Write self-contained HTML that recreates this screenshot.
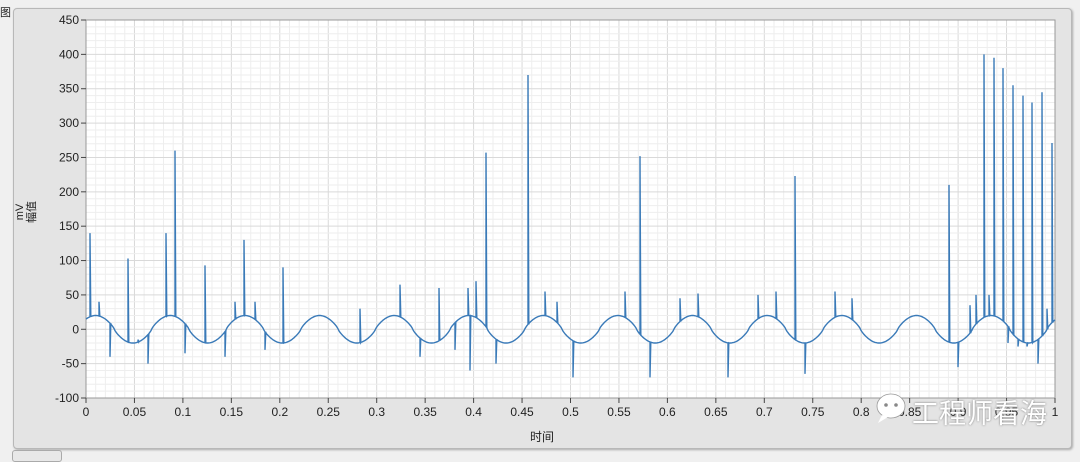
<!DOCTYPE html><html><head><meta charset="utf-8"><style>
body{margin:0;width:1080px;height:456px;background:#f0f0f0;font-family:"Liberation Sans","Noto Sans CJK SC",sans-serif;overflow:hidden;position:relative}
.panel{position:absolute;left:13px;top:8px;width:1057px;height:439px;background:#e4e4e4;border:1px solid #b8b8b8;border-radius:4px;box-shadow:1px 1px 2px #aaa}
.t{position:absolute;font-size:12px;color:#222}
svg{position:absolute;left:0;top:0}
</style></head><body>
<div class="t" style="left:0;top:4px;font-size:11px">图</div>
<div class="panel"></div>
<div style="position:absolute;left:12px;top:450px;width:48px;height:10px;border:1px solid #aaa;background:#e8e8e8;border-radius:3px"></div>
<svg id="s" width="1080" height="456"></svg>
<div class="t" style="left:530px;top:428px">时间</div>
<div class="t" style="left:6px;top:200px;transform:rotate(-90deg);transform-origin:center;font-size:11px;line-height:12px;text-align:center;width:40px">mV<br>幅值</div>
<svg width="1080" height="456" style="position:absolute;left:0;top:0">
<ellipse cx="891" cy="406" rx="14" ry="12" fill="#fff" stroke="#999" stroke-width="0.8"/>
<path d="M882 415 L878 423 L888 417 Z" fill="#fff"/>
<circle cx="886" cy="405" r="1.8" fill="#888"/><circle cx="896" cy="405" r="1.8" fill="#888"/>
</svg>
<div style="position:absolute;left:912px;top:392px;font-size:27px;color:#fff;text-shadow:0 0 2px #777">工程师看海</div>
<script>
const s=document.getElementById('s');let h='';
const X=t=>86+969*t,Y=v=>20+(450-v)*378/550;
h+='<rect x="86" y="20" width="969" height="378" fill="#fff"/>';
for(let i=0;i<=100;i++){let x=X(i/100);h+=`<line x1="${x}" y1="20" x2="${x}" y2="398" stroke="${i%5?'#eeeeee':'#d9d9d9'}"/>`;}
for(let v=-100;v<=450;v+=10){let y=Y(v);h+=`<line x1="86" y1="${y}" x2="1055" y2="${y}" stroke="${v%50?'#eeeeee':'#d9d9d9'}"/>`;}
h+='<rect x="86" y="20" width="969" height="378" fill="none" stroke="#999"/>';
for(let v=-100;v<=450;v+=50){let y=Y(v);h+=`<line x1="81" y1="${y}" x2="86" y2="${y}" stroke="#444"/><text x="79" y="${y+4}" font-size="12" text-anchor="end" fill="#222" font-family="Liberation Sans">${v}</text>`;}
for(let i=0;i<=20;i++){let x=X(i/20);let l=i==20?'1':(i==0?'0':(i/20).toString());h+=`<line x1="${x}" y1="398" x2="${x}" y2="403" stroke="#444"/><text x="${x}" y="416" font-size="12" text-anchor="middle" fill="#222" font-family="Liberation Sans">${l}</text>`;}
const sp=[[90,140],[99,40],[110,-40],[128,103],[138,-15],[148,-50],[166,140],[175,260],[185,-35],[205,93],[225,-40],[235,40],[244,130],[255,40],[265,-30],[283,90],[360,30],[400,65],[420,-40],[439,60],[455,-30],[468,60],[470,-60],[476,70],[486,257],[496,-50],[528,370],[545,55],[557,40],[573,-70],[625,55],[640,252],[650,-70],[680,45],[698,52],[728,-70],[758,50],[776,55],[795,223],[805,-65],[835,55],[852,45],[949,210],[958,-55],[970,35],[976,50],[984,400],[989,50],[994,395],[1003,380],[1008,-20],[1013,355],[1018,-25],[1023,340],[1027,-25],[1032,330],[1038,-50],[1042,345],[1047,30],[1052,271]];
let p='';let si=0;sp.sort((a,b)=>a[0]-b[0]);
for(let x=86;x<=1055;x+=1){let t=(x-86)/969;let c=Math.cos(2*Math.PI*(t-0.01)/0.077);let v=20*Math.sign(c)*Math.pow(Math.abs(c),0.8);
p+=(p?'L':'M')+x+','+Y(v).toFixed(1);
while(si<sp.length&&sp[si][0]<=x){p+='L'+x+','+Y(sp[si][1]).toFixed(1)+'L'+(x+0.8)+','+Y(v).toFixed(1);si++;}}
h+=`<path d="${p}" fill="none" stroke="#3a7ab8" stroke-width="1.4"/>`;
s.innerHTML=h;
</script>
</body></html>
